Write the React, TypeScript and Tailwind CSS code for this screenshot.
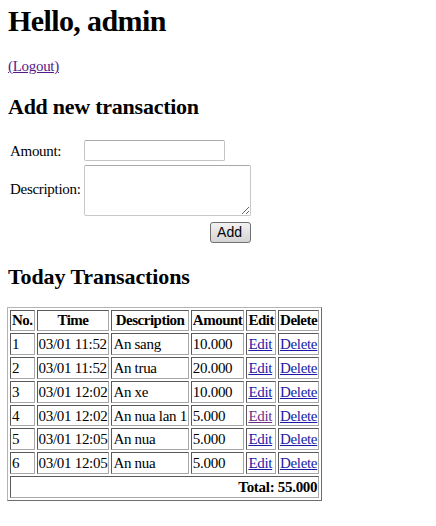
import React from 'react';

type Tx = { no: number; time: string; description: string; amount: string; visited?: boolean };

const transactions: Tx[] = [
  { no: 1, time: '03/01 11:52', description: 'An sang', amount: '10.000' },
  { no: 2, time: '03/01 11:52', description: 'An trua', amount: '20.000' },
  { no: 3, time: '03/01 12:02', description: 'An xe', amount: '10.000' },
  { no: 4, time: '03/01 12:02', description: 'An nua lan 1', amount: '5.000', visited: true },
  { no: 5, time: '03/01 12:05', description: 'An nua', amount: '5.000' },
  { no: 6, time: '03/01 12:05', description: 'An nua', amount: '5.000' },
];

const cell =
  'border border-t-[#5a5a5a] border-l-[#5a5a5a] border-r-[#a8a8a8] border-b-[#a8a8a8] px-px py-0 h-[21.8px] leading-[18px] whitespace-nowrap';

export default function App() {
  return (
    <div className="min-h-[526px] bg-white text-black pl-2 text-[15px] tracking-[-0.3px] font-['Liberation_Serif','Times_New_Roman',serif]">
      {/* Header */}
      <h1 className="pt-[2px] text-[30px] tracking-[-0.6px] font-bold leading-[37px]">Hello, admin</h1>
      <p className="mt-[18px] leading-[18px]">
        <a href="#" className="text-[#551a8b] underline">
          (Logout)
        </a>
      </p>

      {/* Add form */}
      <h2 className="mt-[18px] text-[22px] tracking-[-0.25px] font-bold leading-[28px]">Add new transaction</h2>
      <table className="mt-[18px] border-separate border-spacing-0">
        <tbody>
          <tr>
            <td className="pl-[2px] pr-[3px] align-middle leading-[18px] h-[23px]">Amount:</td>
            <td className="pl-0 align-middle">
              <input
                type="text"
                className="block w-[141px] h-[21px] border border-[#c4c4c4] border-t-[#a9a9a9] rounded-[2px] bg-white outline-none"
              />
            </td>
          </tr>
          <tr>
            <td className="pl-[2px] pr-[3px] align-middle leading-[18px]">Description:</td>
            <td className="pt-[3px]">
              <textarea className="block w-[167px] h-[51px] border border-[#c8c8c8] border-t-[#a9a9a9] rounded-[2px] bg-white outline-none resize" />
            </td>
          </tr>
          <tr>
            <td />
            <td className="pt-[5px] text-right">
              <button className="inline-block w-[41px] h-[21px] pr-px rounded-[3px] border border-[#707070] bg-gradient-to-b from-[#f2f2f2] to-[#d4d4d4] text-[14px] tracking-normal leading-[18px] font-['Liberation_Sans',Arial,sans-serif] text-black">
                Add
              </button>
            </td>
          </tr>
        </tbody>
      </table>

      {/* Transactions */}
      <h2 className="mt-[19px] text-[22px] tracking-[-0.1px] font-bold leading-[28px]">Today Transactions</h2>
      <table className="mt-[16px] -ml-px border-separate border-spacing-[2px] border border-t-[#b4b4b4] border-l-[#b4b4b4] border-r-[#6e6e6e] border-b-[#6e6e6e]">
        <thead>
          <tr>
            <th className={`${cell} text-left tracking-[-0.5px]`}>No.</th>
            <th className={`${cell} tracking-[-0.5px]`}>Time</th>
            <th className={`${cell} tracking-[-0.5px]`}>Description</th>
            <th className={`${cell} tracking-[-0.5px]`}>Amount</th>
            <th className={`${cell} tracking-[-0.5px]`}>Edit</th>
            <th className={`${cell} tracking-[-0.5px]`}>Delete</th>
          </tr>
        </thead>
        <tbody>
          {transactions.map((t) => (
            <tr key={t.no}>
              <td className={`${cell} pr-[8px]`}>{t.no}</td>
              <td className={cell}>{t.time}</td>
              <td className={cell}>{t.description}</td>
              <td className={cell}>{t.amount}</td>
              <td className={cell}>
                <a href="#" className={`underline ${t.visited ? 'text-[#6b2f87]' : 'text-[#1a1aa6]'}`}>
                  Edit
                </a>
              </td>
              <td className={cell}>
                <a href="#" className="underline text-[#1a1aa6]">
                  Delete
                </a>
              </td>
            </tr>
          ))}
          <tr>
            <td colSpan={6} className={`${cell} text-right font-bold`}>
              Total: 55.000
            </td>
          </tr>
        </tbody>
      </table>
    </div>
  );
}
